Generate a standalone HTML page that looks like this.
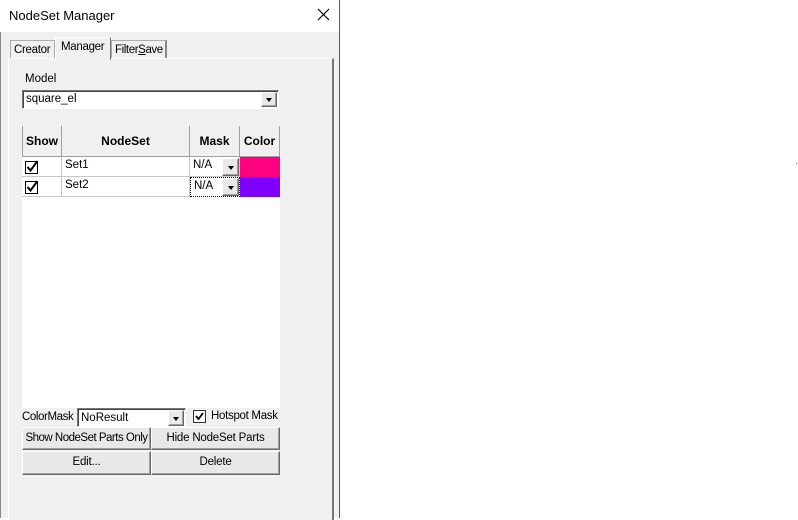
<!DOCTYPE html>
<html><head><style>
*{box-sizing:border-box;margin:0;padding:0}
body{width:798px;height:518px;background:#fff;position:relative;overflow:hidden;font-family:"Liberation Sans",sans-serif;font-size:11.5px;color:#000}
.a{position:absolute}
.win{left:0;top:0;width:340px;height:518px;background:#f0f0f0;border-right:1px solid #555;border-left:1px solid #888}
.title{left:0;top:0;width:339px;height:32px;background:#fff}
.btn{background:#e8e8e8;border:1px solid;border-color:#fff #696969 #696969 #fff;box-shadow:inset -1px -1px 0 #a0a0a0;text-align:center;line-height:20px;white-space:nowrap;letter-spacing:-0.2px}
.cell{border-right:1px solid #c8c8c8;border-bottom:1px solid #c8c8c8}
.hd{background:#f0f0f0;font-weight:bold;text-align:center;line-height:30px;font-size:12px;border-right:1px solid #a0a0a0;border-bottom:1px solid #a0a0a0}
.arrow{width:0;height:0;border-left:3px solid transparent;border-right:3px solid transparent;border-top:4px solid #000}
.cb{width:13px;height:13px;border:1px solid #000;background:#fff}
</style></head><body>
<div class="a win"></div>
<div class="a title"></div>
<div class="a" style="left:9px;top:8px;font-size:13px">NodeSet Manager</div>
<svg class="a" style="left:317px;top:8px" width="13" height="13"><path d="M1 1L12 12M12 1L1 12" stroke="#000" stroke-width="1.2"/></svg>
<!-- tabs -->
<div class="a" style="left:10px;top:40px;width:45px;height:19px;border:1px solid #adadad;border-bottom:none;background:#f0f0f0;padding:3px 0 0 3px;letter-spacing:-0.3px">Creator</div>
<div class="a" style="left:111px;top:40px;width:56px;height:19px;border:1px solid #adadad;border-right:2px solid #888;border-bottom:none;background:#f0f0f0;padding:3px 0 0 3px;letter-spacing:-0.4px">Filter<u>S</u>ave</div>
<div class="a" style="left:8px;top:58px;width:326px;height:462px;border:1px solid #fff;border-right:2px solid #777;border-bottom:none;background:#f0f0f0"></div>
<div class="a" style="left:55px;top:37px;width:56px;height:23px;border:1px solid #fff;border-right:1px solid #777;border-bottom:none;background:#f0f0f0;padding:3px 0 0 5px;letter-spacing:-0.3px">Manager</div>
<div class="a" style="left:25px;top:73px">Model</div>
<div class="a" style="left:22px;top:90px;width:257px;height:19px;background:#fff;border:1px solid;border-color:#777 #fff #fff #777;box-shadow:inset 1px 1px 0 #444;padding:2px 3px">square_el</div>
<div class="a btn" style="left:261px;top:92px;width:16px;height:15px"><div class="arrow a" style="left:4px;top:5px"></div></div>
<!-- grid -->
<div class="a" style="left:22px;top:126px;width:258px;height:282px;background:#fff"></div>
<div class="a hd" style="left:22px;top:126px;width:40px;height:31px;border-left:1px solid #a0a0a0">Show</div>
<div class="a hd" style="left:62px;top:126px;width:128px;height:31px">NodeSet</div>
<div class="a hd" style="left:190px;top:126px;width:50px;height:31px">Mask</div>
<div class="a hd" style="left:240px;top:126px;width:40px;height:31px">Color</div>
<div class="a cell" style="left:22px;top:157px;width:40px;height:20px"></div>
<svg class="a" style="left:25px;top:160px" width="14" height="14"><rect x="0.5" y="1.5" width="12" height="12" fill="#fff" stroke="#000"/><path d="M2.5 7L5.5 10.5L12.5 1" stroke="#000" stroke-width="2" fill="none"/></svg>
<div class="a cell" style="left:62px;top:157px;width:128px;height:20px;padding:2px 3px">Set1</div>
<div class="a cell" style="left:190px;top:157px;width:50px;height:20px;padding:2px 3px">N/A</div>
<div class="a btn" style="left:222px;top:158px;width:17px;height:18px"><div class="arrow a" style="left:5px;top:7px"></div></div>
<div class="a" style="left:240px;top:157px;width:40px;height:20px;background:#ff0080;color:#800040;font-size:9px;padding:4px 4px">...</div>
<div class="a cell" style="left:22px;top:177px;width:40px;height:20px"></div>
<svg class="a" style="left:25px;top:180px" width="14" height="14"><rect x="0.5" y="1.5" width="12" height="12" fill="#fff" stroke="#000"/><path d="M2.5 7L5.5 10.5L12.5 1" stroke="#000" stroke-width="2" fill="none"/></svg>
<div class="a cell" style="left:62px;top:177px;width:128px;height:20px;padding:2px 3px">Set2</div>
<div class="a" style="left:190px;top:177px;width:50px;height:20px;padding:2px 3px;border:1px dotted #000">N/A</div>
<div class="a btn" style="left:222px;top:178px;width:17px;height:18px"><div class="arrow a" style="left:5px;top:7px"></div></div>
<div class="a" style="left:240px;top:177px;width:40px;height:20px;background:#8000ff;color:#400080;font-size:9px;padding:4px 4px">...</div>
<!-- colormask -->
<div class="a" style="left:22px;top:411px;letter-spacing:-0.4px">ColorMask</div>
<div class="a" style="left:77px;top:408px;width:109px;height:19px;background:#fff;border:1px solid;border-color:#777 #fff #fff #777;box-shadow:inset 1px 1px 0 #444;padding:3px 3px">NoResult</div>
<div class="a btn" style="left:168px;top:410px;width:16px;height:16px"><div class="arrow a" style="left:4px;top:6px"></div></div>
<svg class="a" style="left:193px;top:410px" width="14" height="14"><rect x="0.5" y="0.5" width="12" height="12" fill="#fff" stroke="#333"/><path d="M3 6L5.5 9L10 3" stroke="#000" stroke-width="1.8" fill="none"/></svg>
<div class="a" style="left:211px;top:410px;letter-spacing:-0.3px">Hotspot Mask</div>
<div class="a btn" style="left:22px;top:427px;width:129px;height:23px;letter-spacing:-0.5px">Show NodeSet Parts Only</div>
<div class="a btn" style="left:151px;top:427px;width:129px;height:23px">Hide NodeSet Parts</div>
<div class="a btn" style="left:22px;top:451px;width:129px;height:24px">Edit...</div>
<div class="a btn" style="left:151px;top:451px;width:129px;height:24px">Delete</div>
<div class="a" style="left:796px;top:163px;width:1px;height:1px;background:#555"></div>
</body></html>
